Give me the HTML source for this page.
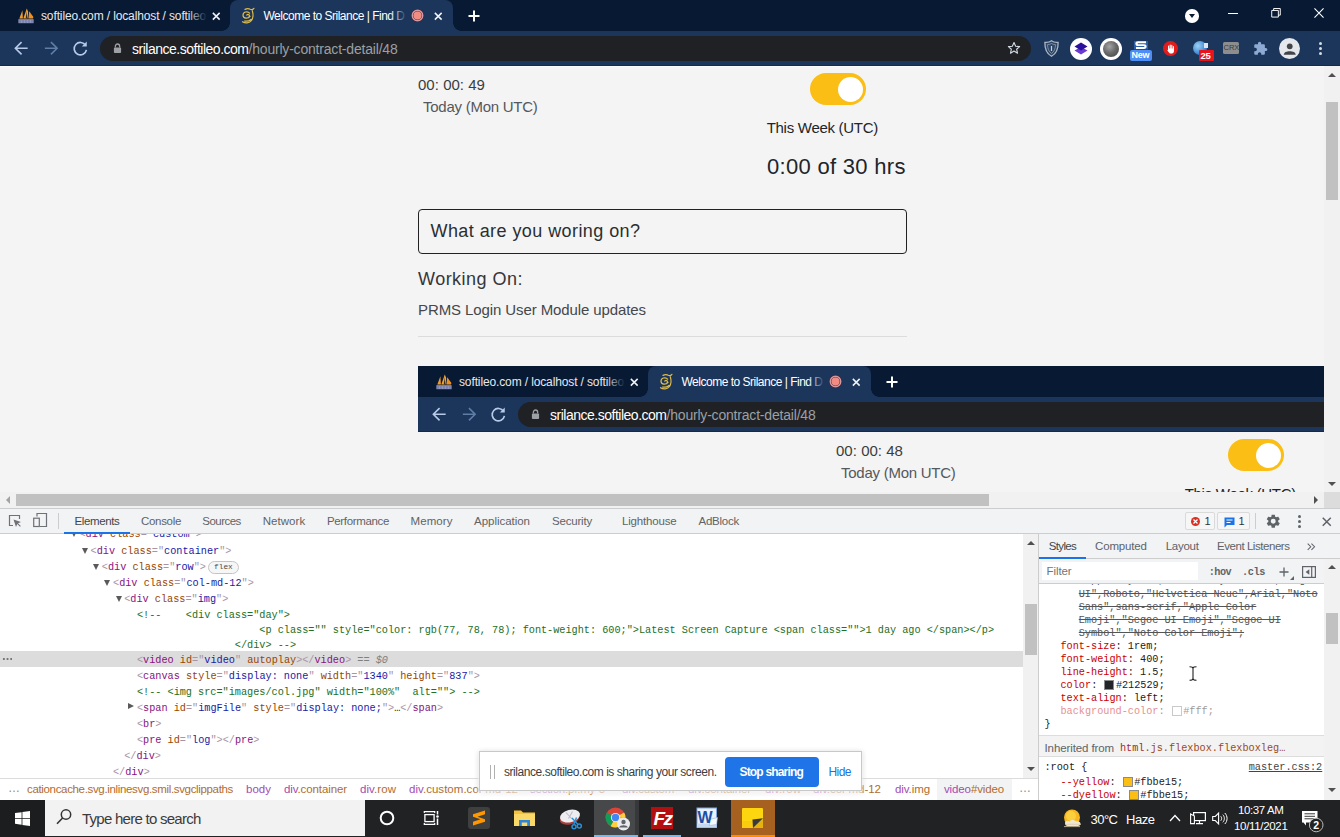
<!DOCTYPE html>
<html lang="en">
<head>
<meta charset="utf-8">
<title>Welcome to Srilance | Find D</title>
<style>
*{box-sizing:border-box;margin:0;padding:0}
html,body{width:1340px;height:837px;overflow:hidden;background:#f4f4f4}
body{position:relative;font-family:"Liberation Sans",sans-serif;font-size:12px;color:#222}
.abs,.t{position:absolute;white-space:nowrap}
.t{line-height:1}
svg{position:absolute;display:block;overflow:visible}

/* ---------- chrome top (66px) ---------- */
.ctop{position:absolute;left:0;top:0;width:1340px;height:66px;overflow:hidden}
.tabstrip{position:absolute;left:0;top:0;width:100%;height:31px;background:#081a33}
.toolbar{position:absolute;left:0;top:31px;width:100%;height:35px;background:#1b355b;border-bottom:1px solid #16294a}
.tab1{position:absolute;left:0;top:0;width:230px;height:31px}
.tab2{position:absolute;left:230px;top:0;width:223px;height:31px}
.tab2bg{position:absolute;left:0;top:0;width:223px;height:31px;background:#1b355b;border-radius:8px 8px 0 0}
.flareL{position:absolute;left:-8px;top:23px;width:8px;height:8px;background:radial-gradient(circle at 0 0,rgba(0,0,0,0) 7.5px,#1b355b 8px)}
.flareR{position:absolute;left:223px;top:23px;width:8px;height:8px;background:radial-gradient(circle at 100% 0,rgba(0,0,0,0) 7.5px,#1b355b 8px)}
.fav1{left:18px;top:8px}
.fav2{left:11px;top:7px}
.tt1{left:41px;top:10px;font-size:12px;color:#e6e9ef}
.tt2{left:33.500px;top:10px;font-size:12px;color:#fff}
.fade2{position:absolute;left:160px;top:6px;width:17px;height:20px;background:linear-gradient(90deg,rgba(27,53,91,0),#1b355b)}
.fade1{position:absolute;left:188px;top:6px;width:19px;height:20px;background:linear-gradient(90deg,rgba(8,26,51,0),#081a33)}
.rec{position:absolute;left:181px;top:9.3px;width:13px;height:13px;border-radius:50%;background:radial-gradient(circle,#f28b82 0,#f28b82 3.600px,#9c5d68 4.100px,#9c5d68 4.700px,#cf9aa0 5px,#cf9aa0 5.500px,#a5656f 5.800px,rgba(165,101,111,0) 6.400px)}
.x1{left:211.500px;top:12px}
.x2{left:204px;top:11.700px}
.plus{left:468px;top:10px}
.nav{top:39.800px}
.back{left:13px}.fwd{left:43px}.reload{left:72px}
.omni{position:absolute;left:100px;top:36px;width:931px;height:25px;border-radius:13px;background:#202124}
.lock{left:12.5px;top:6.5px}
.url{left:32px;top:5.5px;font-size:14px}
.url .dom{color:#fff}.url .path{color:#9aa0a6}
.star{left:907px;top:5px}

/* ---------- page ---------- */
#page{position:absolute;left:0;top:66px;width:1324px;height:426px;background:#f4f4f4;overflow:hidden;box-shadow:inset 0 1px 0 #f9fbfd}
#page .pt{color:#3a3d40}
.toggle{position:absolute;width:56px;height:32px;border-radius:16px;background:#fbbe15}
.toggle i{position:absolute;left:28px;top:4px;width:25px;height:25px;border-radius:50%;background:#fff}
.inp{position:absolute;left:418px;top:143px;width:489px;height:45px;border:1px solid #222;border-radius:4px}
.hr{position:absolute;left:418px;top:270px;width:489px;height:1px;background:#dcdcdc}
#video{position:absolute;left:418px;top:300px;width:906px;height:126px;overflow:hidden}
#video .vpage{position:absolute;left:0;top:66px;width:1340px;height:400px;background:#f4f4f4}

/* scrollbars */
.vsb{position:absolute;left:1324px;top:66px;width:16px;height:426px;background:#f1f1f1}
.vsb b{position:absolute;left:2px;top:36px;width:12px;height:98px;background:#c1c1c1}
.hsb{position:absolute;left:0;top:492px;width:1324px;height:16px;background:#f1f1f1}
.hsb b{position:absolute;left:16px;top:2px;width:973px;height:12px;background:#c1c1c1}
.corner{position:absolute;left:1324px;top:492px;width:16px;height:16px;background:#dcdcdc}


/* ---------- devtools ---------- */
#dt{position:absolute;left:0;top:508px;width:1340px;height:292px;background:#fff;overflow:hidden}
#dt i,.vsb i,.hsb i{position:absolute;display:block;font-style:normal}
.arL{width:0;height:0;border-top:4px solid transparent;border-bottom:4px solid transparent;border-right:4px solid #a3a3a3}
.arR{width:0;height:0;border-top:4px solid transparent;border-bottom:4px solid transparent;border-left:4px solid #505050}
.mono{font-family:"Liberation Mono",monospace;font-size:10.21px}
.dtbar{position:absolute;left:0;top:0;width:1340px;height:26px;background:#f1f3f4;border-top:1px solid #cdcdcd;border-bottom:1px solid #cdcdcd}
.dtbar .tabtx{top:6.5px;font-size:11.5px;color:#5f6368}
.sep{top:4px;width:1px;height:16px;background:#cdcdcd}
.ul{top:23px;height:2px;background:#1a73e8}
.badge{position:absolute;top:3px;height:18px;border:1px solid #dadada;border-radius:2px;background:#f6f6f6}
.errc{left:5px;top:3.500px;width:9px;height:9px;border-radius:50%;background:#d93025}
.kdot{width:3px;height:3px;border-radius:50%;background:#5f6368}
.tree{position:absolute;left:0;top:0;width:1023px;height:271px;overflow:hidden;font-family:"Liberation Mono",monospace;font-size:10.21px;color:#222}
.ln{position:absolute;white-space:pre;line-height:16px;height:16px;margin-top:1px}
.ln.cm{line-height:15px;height:45px;margin-top:1.6px}
.p{color:#a894a6}.n{color:#881280}.a{color:#994500}.v{color:#1a1aa6}.c{color:#236e25}.k{color:#222}
.eq{color:#808080;font-style:italic}
.sel{position:absolute;left:0;width:1023px;height:16px;background:#dcdcdc}
.dots3{width:10px;height:2px;background:radial-gradient(circle,#777 0.9px,transparent 1.2px) 0 0/3.7px 2px repeat-x}
.trd{width:0;height:0;border-left:3.5px solid transparent;border-right:3.5px solid transparent;border-top:6px solid #5a5a5a}
.trr{width:0;height:0;border-top:3.5px solid transparent;border-bottom:3.5px solid transparent;border-left:6px solid #5a5a5a}
.flexb{position:absolute;height:12.5px;width:30.5px;border:1px solid #c4c4c4;border-radius:7px;background:#f6f6f6;font-size:7.8px;line-height:10.5px;text-align:center;color:#4a4a4a;font-family:"Liberation Mono",monospace}
.tsb{position:absolute;left:1023px;top:26px;width:15px;height:244px;background:#f1f1f1}
.tsb b{position:absolute;left:2px;top:70px;width:12px;height:51px;background:#c1c1c1}
.arU{width:0;height:0;border-left:4px solid transparent;border-right:4px solid transparent;border-bottom:4px solid #505050}
.arD{width:0;height:0;border-left:4px solid transparent;border-right:4px solid transparent;border-top:4px solid #505050}
.vdiv{position:absolute;left:1038px;top:26px;width:1px;height:266px;background:#cdcdcd}
.sp{position:absolute;left:1039px;top:26px;width:301px;height:266px;background:#fff}
.sphead{position:absolute;left:0;top:0;width:301px;height:25px;background:#f1f3f4;border-bottom:1px solid #cdcdcd}
.sphead .tabtx2{top:7px;font-size:11.5px;color:#5f6368}
.spfilter{position:absolute;left:0;top:25px;width:285px;height:25px;background:#f1f3f4;border-bottom:1px solid #cdcdcd}
.finp{position:absolute;left:3px;top:3px;width:156px;height:18px;background:#fff}
.spbody{position:absolute;left:0;top:50px;width:285px;height:216px;overflow:hidden;font-family:"Liberation Mono",monospace;font-size:10.21px;color:#222}
.sl{position:absolute;white-space:pre;line-height:13px;height:13px}
.sl.st{text-decoration:line-through;color:#555}
.pn{color:#c80000}
.sw{position:relative!important;display:inline-block!important;width:10px;height:10px;border:1px solid #8a8a8a;vertical-align:-2px;margin-left:1px;margin-right:1.5px}
.inh{position:absolute;left:0;top:151px;width:285px;height:22px;background:#f3f3f3;border-top:1px solid #ddd;border-bottom:1px solid #ddd}
.ssb{position:absolute;left:285px;top:25px;width:16px;height:241px;background:#f1f1f1}
.ssb b{position:absolute;left:2px;top:54px;width:12px;height:31px;background:#c1c1c1}
.bc{position:absolute;left:0;top:270px;width:1038px;height:22px;background:#fff;border-top:1px solid #dcdcdc}
.bc .cr{top:5px;font-size:11.5px;color:#a34bb3}
.bc .o{color:#b06c30}
.crsel{left:937px;top:0;width:74.500px;height:21px;background:#f1f3f4}
.share{position:absolute;left:478.5px;top:243px;width:383px;height:40px;background:#fff;border:1px solid #c8c8c8;box-shadow:0 2px 3px 1px rgba(255,255,255,.72),0 1px 5px rgba(0,0,0,.22)}
.grip{top:13px;width:1.5px;height:14px;background:#b0b0b0}
.stopb{position:absolute;left:245px;top:5px;width:94px;height:29.500px;border-radius:4px;background:#1f75e7}


/* ---------- taskbar ---------- */
#tb{position:absolute;left:0;top:800px;width:1340px;height:37px;background:#212223;overflow:hidden}
.startb{position:absolute;left:0;top:0;width:45px;height:37px;background:#1c1d1e}
.srch{position:absolute;left:45px;top:0;width:320px;height:36px;background:#f2f2f2}
.kd{left:1319px;width:3px;height:3px;border-radius:50%;background:#d5dbe4}
.inh .t{font-family:"Liberation Sans",sans-serif}
.inh .t.mono{font-family:"Liberation Mono",monospace}
</style>
</head>
<body>
<div class="ctop">
  <div class="tabstrip"></div>
  <div class="tab1">
    <svg class="fav1" viewBox="0 0 16 16" width="16" height="16"><path d="M1.3 10.6 L4.4 2.2 L4.9 10.6 Z" fill="#f39a26"/><path d="M5.3 10.600 L8.800 0.400 L10.200 4 L9.500 10.600 Z" fill="#f7a52e"/><path d="M8.300 3 L9.300 10.600 L7.800 10.600 Z" fill="#3a2a20"/><path d="M10.300 10.600 L11.200 3.300 L15.400 9 L15 10.600 Z" fill="#f08f1f"/><rect x="0.400" y="11.200" width="15.200" height="4" fill="#8f96bd"/><path d="M2 12 V15 M5 12 V15 M8 12 V15 M11 12 V15 M14 12 V15" stroke="#5d6490" stroke-width=".7"/></svg>
    <span class="t tt1" style="letter-spacing:-0.126px;">softileo.com / localhost / softileo</span>
    <div class="fade1"></div>
    <svg class="x1" viewBox="0 0 10 10" width="8.5" height="8.500"><path d="M1 1 L9 9 M9 1 L1 9" stroke="#f1f3f6" stroke-width="1.800" fill="none"/></svg>
  </div>
  <div class="tab2">
    <div class="tab2bg"></div>
    <div class="flareL"></div><div class="flareR"></div>
    <svg class="fav2" viewBox="241 7 14 17" width="14" height="17"><path d="M245 9.400 Q247.800 7.900 250.300 9.300 Q252.400 10.300 253.900 8.300 M249.600 13.200 C247.600 10.600 242.800 12 243 15.400 C243.200 18.600 248 19.100 250 16.300 M246.800 15 C248.300 13.700 250.200 15.100 249 16.400 M252.300 10.800 C253.300 14 253.200 18 251.500 20.500 C249.500 23.400 245 23.300 242.500 21.700 M244.500 21 C247 21.500 249.500 20.800 251 19.500" stroke="#e0bd48" stroke-width="1.200" fill="none" stroke-linecap="round"/></svg>
    <span class="t tt2" style="letter-spacing:-0.498px;">Welcome to Srilance | Find D</span>
    <div class="fade2"></div>
    <div class="rec"></div>
    <svg class="x2" viewBox="0 0 10 10" width="8.500" height="8.500"><path d="M1 1 L9 9 M9 1 L1 9" stroke="#f1f3f6" stroke-width="1.800" fill="none"/></svg>
  </div>
  <svg class="plus" viewBox="0 0 12 12" width="12" height="12"><path d="M6 0.5 V11.5 M0.5 6 H11.5" stroke="#fff" stroke-width="2" fill="none"/></svg>
  <div class="toolbar"></div>
  <svg class="nav back" viewBox="0 0 16 16" width="16.500" height="16.500"><path d="M14.200 8 H3 M8.300 2 L2.300 8 L8.300 14" stroke="#b7cbe8" stroke-width="1.550" fill="none"/></svg>
  <svg class="nav fwd" viewBox="0 0 16 16" width="16.500" height="16.500"><path d="M1.800 8 H13 M7.700 2 L13.700 8 L7.700 14" stroke="#5f7da5" stroke-width="1.550" fill="none"/></svg>
  <svg class="nav reload" viewBox="0 0 16 16" width="16.500" height="16.500"><path d="M13.200 5.200 A6 6 0 1 0 14 9.500" stroke="#b7cbe8" stroke-width="1.600" fill="none"/><path d="M14.300 1.500 V6.300 H9.500 Z" fill="#b7cbe8"/></svg>
  <div class="omni">
    <svg class="lock" viewBox="0 0 10 12" width="9" height="11"><path d="M2.6 5 V3.4 A2.4 2.4 0 0 1 7.4 3.4 V5" stroke="#9da0a5" stroke-width="1.4" fill="none"/><rect x="1" y="5" width="8" height="6" rx="1" fill="#9da0a5"/></svg>
    <span class="t url"><span class="dom" style="letter-spacing:-0.492px;">srilance.softileo.com</span><span class="path" style="letter-spacing:-0.195px;">/hourly-contract-detail/48</span></span>
    <svg class="star" viewBox="0 0 16 16" width="14" height="14"><path d="M8 1.8 L9.9 6 L14.4 6.4 L11 9.4 L12 13.9 L8 11.5 L4 13.9 L5 9.4 L1.6 6.4 L6.1 6 Z" stroke="#d6dde8" stroke-width="1.250" fill="none" stroke-linejoin="round"/></svg>
  </div>
  <div class="ext">
  <!-- shield -->
  <svg style="left:1044px;top:40px" width="15" height="17" viewBox="0 0 15 17"><path d="M7.5 0.8 C5.5 2.3 3 2.6 0.9 2.4 C0.7 8.5 2.6 13.5 7.5 16.2 C12.4 13.5 14.3 8.5 14.1 2.4 C12 2.6 9.5 2.3 7.5 0.8 Z" fill="#2d4669" stroke="#aeb6c2" stroke-width="1.300"/><path d="M7.5 3.5 C6.3 4.3 4.8 4.6 3.5 4.6 C3.6 8.6 4.8 11.6 7.5 13.5 C10.2 11.6 11.4 8.6 11.5 4.6 C10.2 4.6 8.7 4.3 7.5 3.5 Z" fill="none" stroke="#8f9aab" stroke-width=".800"/><path d="M7.5 6 V11" stroke="#c9d0da" stroke-width="1.200"/></svg>
  <!-- white circle purple layers -->
  <div class="abs" style="left:1070px;top:37.5px;width:22px;height:22px;border-radius:50%;background:#fff"></div>
  <svg style="left:1074px;top:42px" width="14" height="13" viewBox="0 0 14 13"><path d="M7 5 L13.5 8.5 L7 12.5 L0.5 8.5 Z" fill="#6a3bd1"/><path d="M7 0.5 L13.5 4.5 L7 8.5 L0.5 4.5 Z" fill="#2b109c"/></svg>
  <!-- white circle gray sphere -->
  <div class="abs" style="left:1100px;top:37.5px;width:22px;height:22px;border-radius:50%;background:#fff"></div>
  <div class="abs" style="left:1103px;top:40.500px;width:16px;height:16px;border-radius:50%;background:radial-gradient(circle at 40% 35%,#a5a5a5 0,#6b6b6b 45%,#3f3f3f 100%)"></div>
  <!-- S New -->
  <svg style="left:1134px;top:41px" width="14" height="8.500" viewBox="0 0 14 10" preserveAspectRatio="none"><rect width="14" height="10" fill="#2d5fa8"/><path d="M12 1.5 H4 C2 1.5 2 4.8 4 4.8 H10 C12 4.8 12 8.3 10 8.3 H2" stroke="#fff" stroke-width="2.2" fill="none"/></svg>
  <div class="abs" style="left:1130px;top:50px;width:22px;height:11px;border-radius:2px;background:#4c8df6"></div>
  <span class="t" style="left:1131.5px;top:51.2px;font-size:9px;font-weight:bold;color:#fff;letter-spacing:-0.2px">New</span>
  <!-- stop hand -->
  <div class="abs" style="left:1163px;top:41px;width:15px;height:15px;border-radius:50%;background:#e21b1b"></div>
  <svg style="left:1166.5px;top:43.5px" width="8" height="10" viewBox="0 0 8 10"><path d="M1.6 5 V2 M3.2 5 V1 M4.8 5 V1.3 M6.4 5.5 V2.5" stroke="#fff" stroke-width="1.1" stroke-linecap="round"/><path d="M1 4.5 H7 V7 C7 9 5.5 9.6 4 9.6 C2.5 9.6 1.8 8.8 0.3 6.3 L1 5.8 Z" fill="#fff"/></svg>
  <!-- globe + 25 -->
  <div class="abs" style="left:1193px;top:41px;width:14px;height:14px;border-radius:50%;background:radial-gradient(circle at 35% 35%,#9fd0f5,#2b7fd0 70%,#1d5ca8)"></div>
  <div class="abs" style="left:1204px;top:43px;width:4px;height:5px;background:#dfe6ef"></div>
  <div class="abs" style="left:1198.5px;top:50px;width:15px;height:11px;border-radius:1px;background:#e8141c"></div>
  <span class="t" style="left:1200.5px;top:50.8px;font-size:9.5px;font-weight:bold;color:#fff;letter-spacing:-0.3px">25</span>
  <!-- CRX -->
  <div class="abs" style="left:1222.5px;top:42px;width:16px;height:12px;border-radius:1.5px;background:#8d8d8d"></div>
  <span class="t" style="left:1223.6px;top:44.2px;font-size:7.6px;color:#3c3c3c;letter-spacing:-0.2px">CRX</span>
  <!-- puzzle -->
  <svg style="left:1253px;top:41px" width="15" height="15" viewBox="0 0 24 24"><path fill="#8eaad4" d="M20.5 11H19V7c0-1.1-.9-2-2-2h-4V3.5a2.5 2.5 0 0 0-5 0V5H4c-1.1 0-2 .9-2 2v3.8h1.5c1.5 0 2.7 1.2 2.7 2.7S5 16.200 3.500 16.200H2V20c0 1.100.900 2 2 2h3.800v-1.500c0-1.500 1.200-2.700 2.700-2.700s2.700 1.200 2.700 2.700V22H17c1.100 0 2-.900 2-2v-4h1.500a2.500 2.500 0 0 0 0-5z"/></svg>
  <!-- avatar -->
  <div class="abs" style="left:1279.3px;top:38px;width:21px;height:21px;border-radius:50%;background:#e4e7eb"></div>
  <svg style="left:1283px;top:42.5px" width="13.5" height="12" viewBox="0 0 14 12"><circle cx="7" cy="3.2" r="3" fill="#414549"/><path d="M0.8 12 C0.8 7.200 13.200 7.200 13.200 12 Z" fill="#414549"/></svg>
  <!-- kebab -->
  <div class="abs kd" style="top:42.2px"></div><div class="abs kd" style="top:47.2px"></div><div class="abs kd" style="top:52.2px"></div>
  <!-- window controls -->
  <div class="abs" style="left:1185.200px;top:9px;width:13.500px;height:13.500px;border-radius:50%;background:#fff"></div>
  <svg style="left:1189px;top:14.300px" width="6" height="4" viewBox="0 0 6 4"><path d="M0 0 H6 L3 4 Z" fill="#0b1a33"/></svg>
  <div class="abs" style="left:1228px;top:12.800px;width:10px;height:1.200px;background:#fff"></div>
  <svg style="left:1270.800px;top:8.200px" width="10" height="9.600" viewBox="0 0 11 11"><path d="M0.6 2.8 H8.200 V10.400 H0.600 Z M2.800 2.800 V0.600 H10.400 V8.200 H8.200" stroke="#fff" stroke-width="1.1" fill="none"/></svg>
  <svg style="left:1313.600px;top:8px" width="10" height="10" viewBox="0 0 11 11"><path d="M0.500 0.500 L10.500 10.500 M10.500 0.500 L0.500 10.500" stroke="#fff" stroke-width="1.2"/></svg>
</div>

</div>


<div id="page">
  <span class="t" style="letter-spacing:0.027px;left:418px;top:11px;font-size:15px;color:#3a3d40">00: 00: 49</span>
  <span class="t" style="letter-spacing:-0.257px;left:423px;top:33px;font-size:15px;color:#55585c">Today (Mon UTC)</span>
  <div class="toggle" style="left:810px;top:7px"><i></i></div>
  <span class="t" style="letter-spacing:-0.284px;left:766.7px;top:53.5px;font-size:15px;color:#212529">This Week (UTC)</span>
  <span class="t" style="letter-spacing:0.304px;left:767px;top:90px;font-size:22px;color:#212529">0:00 of 30 hrs</span>
  <div class="inp"><span class="t" style="letter-spacing:0.430px;left:11.5px;top:12px;font-size:18px;color:#2b2e31">What are you woring on?</span></div>
  <span class="t" style="letter-spacing:0.482px;left:418px;top:204px;font-size:18px;color:#33363a">Working On:</span>
  <span class="t" style="letter-spacing:-0.099px;left:418px;top:236px;font-size:15px;color:#44474b">PRMS Login User Module updates</span>
  <div class="hr"></div>
  <div id="video">
    <div class="ctop">
  <div class="tabstrip"></div>
  <div class="tab1">
    <svg class="fav1" viewBox="0 0 16 16" width="16" height="16"><path d="M1.3 10.6 L4.4 2.2 L4.9 10.6 Z" fill="#f39a26"/><path d="M5.3 10.600 L8.800 0.400 L10.200 4 L9.500 10.600 Z" fill="#f7a52e"/><path d="M8.300 3 L9.300 10.600 L7.800 10.600 Z" fill="#3a2a20"/><path d="M10.300 10.600 L11.200 3.300 L15.400 9 L15 10.600 Z" fill="#f08f1f"/><rect x="0.400" y="11.200" width="15.200" height="4" fill="#8f96bd"/><path d="M2 12 V15 M5 12 V15 M8 12 V15 M11 12 V15 M14 12 V15" stroke="#5d6490" stroke-width=".7"/></svg>
    <span class="t tt1" style="letter-spacing:-0.126px;">softileo.com / localhost / softileo</span>
    <div class="fade1"></div>
    <svg class="x1" viewBox="0 0 10 10" width="8.5" height="8.500"><path d="M1 1 L9 9 M9 1 L1 9" stroke="#f1f3f6" stroke-width="1.800" fill="none"/></svg>
  </div>
  <div class="tab2">
    <div class="tab2bg"></div>
    <div class="flareL"></div><div class="flareR"></div>
    <svg class="fav2" viewBox="241 7 14 17" width="14" height="17"><path d="M245 9.400 Q247.800 7.900 250.300 9.300 Q252.400 10.300 253.900 8.300 M249.600 13.200 C247.600 10.600 242.800 12 243 15.400 C243.200 18.600 248 19.100 250 16.300 M246.800 15 C248.300 13.700 250.200 15.100 249 16.400 M252.300 10.800 C253.300 14 253.200 18 251.500 20.500 C249.500 23.400 245 23.300 242.500 21.700 M244.500 21 C247 21.500 249.500 20.800 251 19.500" stroke="#e0bd48" stroke-width="1.200" fill="none" stroke-linecap="round"/></svg>
    <span class="t tt2" style="letter-spacing:-0.498px;">Welcome to Srilance | Find D</span>
    <div class="fade2"></div>
    <div class="rec"></div>
    <svg class="x2" viewBox="0 0 10 10" width="8.500" height="8.500"><path d="M1 1 L9 9 M9 1 L1 9" stroke="#f1f3f6" stroke-width="1.800" fill="none"/></svg>
  </div>
  <svg class="plus" viewBox="0 0 12 12" width="12" height="12"><path d="M6 0.5 V11.5 M0.5 6 H11.5" stroke="#fff" stroke-width="2" fill="none"/></svg>
  <div class="toolbar"></div>
  <svg class="nav back" viewBox="0 0 16 16" width="16.500" height="16.500"><path d="M14.200 8 H3 M8.300 2 L2.300 8 L8.300 14" stroke="#b7cbe8" stroke-width="1.550" fill="none"/></svg>
  <svg class="nav fwd" viewBox="0 0 16 16" width="16.500" height="16.500"><path d="M1.800 8 H13 M7.700 2 L13.700 8 L7.700 14" stroke="#5f7da5" stroke-width="1.550" fill="none"/></svg>
  <svg class="nav reload" viewBox="0 0 16 16" width="16.500" height="16.500"><path d="M13.200 5.200 A6 6 0 1 0 14 9.500" stroke="#b7cbe8" stroke-width="1.600" fill="none"/><path d="M14.300 1.500 V6.300 H9.500 Z" fill="#b7cbe8"/></svg>
  <div class="omni">
    <svg class="lock" viewBox="0 0 10 12" width="9" height="11"><path d="M2.6 5 V3.4 A2.4 2.4 0 0 1 7.4 3.4 V5" stroke="#9da0a5" stroke-width="1.4" fill="none"/><rect x="1" y="5" width="8" height="6" rx="1" fill="#9da0a5"/></svg>
    <span class="t url"><span class="dom" style="letter-spacing:-0.492px;">srilance.softileo.com</span><span class="path" style="letter-spacing:-0.195px;">/hourly-contract-detail/48</span></span>
    <svg class="star" viewBox="0 0 16 16" width="14" height="14"><path d="M8 1.8 L9.9 6 L14.4 6.4 L11 9.4 L12 13.9 L8 11.5 L4 13.9 L5 9.4 L1.6 6.4 L6.1 6 Z" stroke="#d6dde8" stroke-width="1.250" fill="none" stroke-linejoin="round"/></svg>
  </div>
  <div class="ext">
  <!-- shield -->
  <svg style="left:1044px;top:40px" width="15" height="17" viewBox="0 0 15 17"><path d="M7.5 0.8 C5.5 2.3 3 2.6 0.9 2.4 C0.7 8.5 2.6 13.5 7.5 16.2 C12.4 13.5 14.3 8.5 14.1 2.4 C12 2.6 9.5 2.3 7.5 0.8 Z" fill="#2d4669" stroke="#aeb6c2" stroke-width="1.300"/><path d="M7.5 3.5 C6.3 4.3 4.8 4.6 3.5 4.6 C3.6 8.6 4.8 11.6 7.5 13.5 C10.2 11.6 11.4 8.6 11.5 4.6 C10.2 4.6 8.7 4.3 7.5 3.5 Z" fill="none" stroke="#8f9aab" stroke-width=".800"/><path d="M7.5 6 V11" stroke="#c9d0da" stroke-width="1.200"/></svg>
  <!-- white circle purple layers -->
  <div class="abs" style="left:1070px;top:37.5px;width:22px;height:22px;border-radius:50%;background:#fff"></div>
  <svg style="left:1074px;top:42px" width="14" height="13" viewBox="0 0 14 13"><path d="M7 5 L13.5 8.5 L7 12.5 L0.5 8.5 Z" fill="#6a3bd1"/><path d="M7 0.5 L13.5 4.5 L7 8.5 L0.5 4.5 Z" fill="#2b109c"/></svg>
  <!-- white circle gray sphere -->
  <div class="abs" style="left:1100px;top:37.5px;width:22px;height:22px;border-radius:50%;background:#fff"></div>
  <div class="abs" style="left:1103px;top:40.500px;width:16px;height:16px;border-radius:50%;background:radial-gradient(circle at 40% 35%,#a5a5a5 0,#6b6b6b 45%,#3f3f3f 100%)"></div>
  <!-- S New -->
  <svg style="left:1134px;top:41px" width="14" height="8.500" viewBox="0 0 14 10" preserveAspectRatio="none"><rect width="14" height="10" fill="#2d5fa8"/><path d="M12 1.5 H4 C2 1.5 2 4.8 4 4.8 H10 C12 4.8 12 8.3 10 8.3 H2" stroke="#fff" stroke-width="2.2" fill="none"/></svg>
  <div class="abs" style="left:1130px;top:50px;width:22px;height:11px;border-radius:2px;background:#4c8df6"></div>
  <span class="t" style="left:1131.5px;top:51.2px;font-size:9px;font-weight:bold;color:#fff;letter-spacing:-0.2px">New</span>
  <!-- stop hand -->
  <div class="abs" style="left:1163px;top:41px;width:15px;height:15px;border-radius:50%;background:#e21b1b"></div>
  <svg style="left:1166.5px;top:43.5px" width="8" height="10" viewBox="0 0 8 10"><path d="M1.6 5 V2 M3.2 5 V1 M4.8 5 V1.3 M6.4 5.5 V2.5" stroke="#fff" stroke-width="1.1" stroke-linecap="round"/><path d="M1 4.5 H7 V7 C7 9 5.5 9.6 4 9.6 C2.5 9.6 1.8 8.8 0.3 6.3 L1 5.8 Z" fill="#fff"/></svg>
  <!-- globe + 25 -->
  <div class="abs" style="left:1193px;top:41px;width:14px;height:14px;border-radius:50%;background:radial-gradient(circle at 35% 35%,#9fd0f5,#2b7fd0 70%,#1d5ca8)"></div>
  <div class="abs" style="left:1204px;top:43px;width:4px;height:5px;background:#dfe6ef"></div>
  <div class="abs" style="left:1198.5px;top:50px;width:15px;height:11px;border-radius:1px;background:#e8141c"></div>
  <span class="t" style="left:1200.5px;top:50.8px;font-size:9.5px;font-weight:bold;color:#fff;letter-spacing:-0.3px">25</span>
  <!-- CRX -->
  <div class="abs" style="left:1222.5px;top:42px;width:16px;height:12px;border-radius:1.5px;background:#8d8d8d"></div>
  <span class="t" style="left:1223.6px;top:44.2px;font-size:7.6px;color:#3c3c3c;letter-spacing:-0.2px">CRX</span>
  <!-- puzzle -->
  <svg style="left:1253px;top:41px" width="15" height="15" viewBox="0 0 24 24"><path fill="#8eaad4" d="M20.5 11H19V7c0-1.1-.9-2-2-2h-4V3.5a2.5 2.5 0 0 0-5 0V5H4c-1.1 0-2 .9-2 2v3.8h1.5c1.5 0 2.7 1.2 2.7 2.7S5 16.200 3.500 16.200H2V20c0 1.100.900 2 2 2h3.800v-1.500c0-1.500 1.200-2.700 2.700-2.700s2.700 1.200 2.700 2.700V22H17c1.100 0 2-.900 2-2v-4h1.500a2.500 2.500 0 0 0 0-5z"/></svg>
  <!-- avatar -->
  <div class="abs" style="left:1279.3px;top:38px;width:21px;height:21px;border-radius:50%;background:#e4e7eb"></div>
  <svg style="left:1283px;top:42.5px" width="13.5" height="12" viewBox="0 0 14 12"><circle cx="7" cy="3.2" r="3" fill="#414549"/><path d="M0.8 12 C0.8 7.200 13.200 7.200 13.200 12 Z" fill="#414549"/></svg>
  <!-- kebab -->
  <div class="abs kd" style="top:42.2px"></div><div class="abs kd" style="top:47.2px"></div><div class="abs kd" style="top:52.2px"></div>
  <!-- window controls -->
  <div class="abs" style="left:1185.200px;top:9px;width:13.500px;height:13.500px;border-radius:50%;background:#fff"></div>
  <svg style="left:1189px;top:14.300px" width="6" height="4" viewBox="0 0 6 4"><path d="M0 0 H6 L3 4 Z" fill="#0b1a33"/></svg>
  <div class="abs" style="left:1228px;top:12.800px;width:10px;height:1.200px;background:#fff"></div>
  <svg style="left:1270.800px;top:8.200px" width="10" height="9.600" viewBox="0 0 11 11"><path d="M0.6 2.8 H8.200 V10.400 H0.600 Z M2.800 2.800 V0.600 H10.400 V8.200 H8.200" stroke="#fff" stroke-width="1.1" fill="none"/></svg>
  <svg style="left:1313.600px;top:8px" width="10" height="10" viewBox="0 0 11 11"><path d="M0.500 0.500 L10.500 10.500 M10.500 0.500 L0.500 10.500" stroke="#fff" stroke-width="1.2"/></svg>
</div>

</div>

    <div class="vpage">
      <span class="t" style="letter-spacing:0.027px;left:418px;top:11px;font-size:15px;color:#3a3d40">00: 00: 48</span>
      <span class="t" style="letter-spacing:-0.257px;left:423px;top:33px;font-size:15px;color:#55585c">Today (Mon UTC)</span>
      <div class="toggle" style="left:810px;top:7px"><i></i></div>
      <span class="t" style="letter-spacing:-0.284px;left:766.7px;top:53.5px;font-size:15px;color:#212529">This Week (UTC)</span>
    </div>
  </div>
</div>
<div class="vsb"><b></b><i class="arU" style="left:4px;top:7px"></i><i class="arD" style="left:4px;top:416px"></i></div>
<div class="hsb"><b></b><i class="arL" style="left:6px;top:4px"></i><i class="arR" style="left:1314px;top:4px"></i></div>
<div class="corner"></div>

<div id="dt">
<div class="tree">
<i class="trd" style="left:70.7px;top:23px"></i><div class="ln " style="left:79.40px;top:17px"><span class="p">&lt;</span><span class="n">div</span> <span class="a">class</span><span class="p">="</span><span class="v">custom</span><span class="p">"</span><span class="p">&gt;</span></div>
<i class="trd" style="left:81.9px;top:40px"></i><div class="ln " style="left:90.60px;top:34px"><span class="p">&lt;</span><span class="n">div</span> <span class="a">class</span><span class="p">="</span><span class="v">container</span><span class="p">"</span><span class="p">&gt;</span></div>
<i class="trd" style="left:93.1px;top:56px"></i><div class="ln " style="left:101.80px;top:50px"><span class="p">&lt;</span><span class="n">div</span> <span class="a">class</span><span class="p">="</span><span class="v">row</span><span class="p">"</span><span class="p">&gt;</span></div>
<i class="trd" style="left:104.3px;top:72px"></i><div class="ln " style="left:113.00px;top:66px"><span class="p">&lt;</span><span class="n">div</span> <span class="a">class</span><span class="p">="</span><span class="v">col-md-12</span><span class="p">"</span><span class="p">&gt;</span></div>
<i class="trd" style="left:115.5px;top:88px"></i><div class="ln " style="left:124.20px;top:82px"><span class="p">&lt;</span><span class="n">div</span> <span class="a">class</span><span class="p">="</span><span class="v">img</span><span class="p">"</span><span class="p">&gt;</span></div>
<div class="ln c cm" style="left:136.90px;top:98px">&lt;!--    &lt;div class="day"&gt;
                    &lt;p class="" style="color: rgb(77, 78, 78); font-weight: 600;"&gt;Latest Screen Capture &lt;span class=""&gt;1 day ago &lt;/span&gt;&lt;/p&gt;
                &lt;/div&gt; --&gt;</div>
<div class="sel" style="top:143px"></div><span class="t dots3" style="left:1.6px;top:150px"></span>
<div class="ln " style="left:136.90px;top:143px"><span class="p">&lt;</span><span class="n">video</span> <span class="a">id</span><span class="p">="</span><span class="v">video</span><span class="p">"</span> <span class="a">autoplay</span><span class="p">&gt;</span><span class="p">&lt;/</span><span class="n">video</span><span class="p">&gt;</span><span class="eq"> == $0</span></div>
<div class="ln " style="left:136.90px;top:159px"><span class="p">&lt;</span><span class="n">canvas</span> <span class="a">style</span><span class="p">="</span><span class="v">display: none</span><span class="p">"</span> <span class="a">width</span><span class="p">="</span><span class="v">1340</span><span class="p">"</span> <span class="a">height</span><span class="p">="</span><span class="v">837</span><span class="p">"</span><span class="p">&gt;</span></div>
<div class="ln " style="left:136.90px;top:175px"><span class="c">&lt;!-- &lt;img src="images/col.jpg" width="100%"  alt=""&gt; --&gt;</span></div>
<i class="trr" style="left:128.4px;top:195px"></i><div class="ln " style="left:136.90px;top:191px"><span class="p">&lt;</span><span class="n">span</span> <span class="a">id</span><span class="p">="</span><span class="v">imgFile</span><span class="p">"</span> <span class="a">style</span><span class="p">="</span><span class="v">display: none;</span><span class="p">"</span><span class="p">&gt;</span><span class="k">…</span><span class="p">&lt;/</span><span class="n">span</span><span class="p">&gt;</span></div>
<div class="ln " style="left:136.90px;top:207px"><span class="p">&lt;</span><span class="n">br</span><span class="p">&gt;</span></div>
<div class="ln " style="left:136.90px;top:223px"><span class="p">&lt;</span><span class="n">pre</span> <span class="a">id</span><span class="p">="</span><span class="v">log</span><span class="p">"</span><span class="p">&gt;</span><span class="p">&lt;/</span><span class="n">pre</span><span class="p">&gt;</span></div>
<div class="ln " style="left:124.20px;top:239px"><span class="p">&lt;/</span><span class="n">div</span><span class="p">&gt;</span></div>
<div class="ln " style="left:113.00px;top:255px"><span class="p">&lt;/</span><span class="n">div</span><span class="p">&gt;</span></div>
<span class="flexb" style="left:208.2px;top:53px">flex</span>
</div>
<!-- tree scrollbar -->
<div class="tsb"><b></b>
  <i class="arU" style="left:3.5px;top:7px"></i><i class="arD" style="left:3.5px;top:233px"></i>
</div>
<div class="vdiv"></div>

<!-- top toolbar -->
<div class="dtbar">
  <svg style="left:8px;top:5px" width="14" height="14" viewBox="0 0 14 14"><path d="M11.5 5 V1.5 H1.5 V11.5 H5" stroke="#6e7175" stroke-width="1.200" fill="none"/><path d="M5.5 5.5 L8 13 L9.3 10 L12 12.8 L12.8 12 L10 9.3 L13 8 Z" fill="#6e7175"/></svg>
  <svg style="left:32px;top:3px" width="16" height="16" viewBox="0 0 16 16"><path d="M5 4.500 V1.500 H14.500 V14.500 H8" stroke="#6e7175" stroke-width="1.200" fill="none"/><rect x="1.700" y="6.200" width="5.600" height="8.300" stroke="#6e7175" stroke-width="1.200" fill="none"/></svg>
  <i class="sep" style="left:58px"></i>
  <span class="t tabtx" style="letter-spacing:-0.367px;left:74.5px;color:#43464a">Elements</span>
  <i class="ul" style="left:64px;width:66px"></i>
  <span class="t tabtx" style="letter-spacing:-0.315px;left:141px">Console</span>
  <span class="t tabtx" style="letter-spacing:-0.527px;left:202.3px">Sources</span>
  <span class="t tabtx" style="letter-spacing:0.045px;left:262.7px">Network</span>
  <span class="t tabtx" style="letter-spacing:-0.349px;left:327px">Performance</span>
  <span class="t tabtx" style="letter-spacing:0.078px;left:410.5px">Memory</span>
  <span class="t tabtx" style="letter-spacing:-0.024px;left:474px">Application</span>
  <span class="t tabtx" style="letter-spacing:-0.193px;left:552px">Security</span>
  <span class="t tabtx" style="letter-spacing:-0.178px;left:622px">Lighthouse</span>
  <span class="t tabtx" style="letter-spacing:-0.241px;left:698.5px">AdBlock</span>

  <div class="badge" style="left:1185px;width:30px"><i class="errc"></i><svg style="left:6px;top:4.500px" width="7" height="7" viewBox="0 0 7 7"><path d="M1.5 1.5 L5.5 5.5 M5.5 1.5 L1.5 5.5" stroke="#fff" stroke-width="1.2"/></svg><span class="t" style="left:18.5px;top:3px;font-size:11px;color:#333">1</span></div>
  <div class="badge" style="left:1217px;width:33px"><svg style="left:6px;top:3.500px" width="11" height="11" viewBox="0 0 11 11"><path d="M0.5 0.5 H10.5 V8 H3 L0.5 10.5 Z" fill="#1a73e8"/><path d="M2.5 3 H8.5 M2.5 5.5 H6.5" stroke="#fff" stroke-width="1.1"/></svg><span class="t" style="left:20.5px;top:3px;font-size:11px;color:#333">1</span></div>
  <i class="sep" style="left:1255px"></i>
  <svg style="left:1264.5px;top:3.8px" width="16.5" height="16.5" viewBox="0 0 24 24"><path fill="#5f6368" d="M19.14 12.94c.04-.3.06-.61.06-.94 0-.32-.02-.64-.07-.94l2.03-1.58a.49.49 0 0 0 .12-.61l-1.92-3.32a.49.49 0 0 0-.59-.22l-2.39.96c-.5-.38-1.03-.7-1.62-.94l-.36-2.54a.48.48 0 0 0-.48-.41h-3.84c-.24 0-.43.17-.47.41l-.36 2.54c-.59.24-1.13.57-1.62.94l-2.39-.96a.49.49 0 0 0-.59.22L2.74 8.87c-.12.21-.08.47.12.61l2.03 1.58c-.05.3-.09.63-.09.94s.02.64.07.94l-2.03 1.58a.49.49 0 0 0-.12.61l1.92 3.32c.12.22.37.29.59.22l2.39-.96c.5.38 1.03.7 1.62.94l.36 2.54c.05.24.24.41.48.41h3.84c.24 0 .44-.17.47-.41l.36-2.54c.59-.24 1.13-.56 1.62-.94l2.39.96c.22.08.47 0 .59-.22l1.92-3.32c.12-.22.07-.47-.12-.61l-2.01-1.58zM12 15.6A3.6 3.6 0 1 1 12 8.4a3.6 3.6 0 0 1 0 7.2z"/></svg>
  <i class="kdot" style="left:1298px;top:5.5px"></i><i class="kdot" style="left:1298px;top:10.5px"></i><i class="kdot" style="left:1298px;top:15.5px"></i>
  <svg style="left:1322px;top:7.5px" width="9.5" height="9.5" viewBox="0 0 9 9"><path d="M0.7 0.7 L8.3 8.3 M8.3 0.7 L0.7 8.3" stroke="#5f6368" stroke-width="1.4"/></svg>
</div>

<!-- styles pane -->
<div class="sp">
  <div class="sphead">
    <span class="t tabtx2" style="letter-spacing:-0.638px;left:9.7px;color:#43464a">Styles</span>
    <i class="ul" style="left:0;top:23px;width:47px"></i>
    <span class="t tabtx2" style="letter-spacing:-0.158px;left:56px">Computed</span>
    <span class="t tabtx2" style="letter-spacing:-0.255px;left:126.7px">Layout</span>
    <span class="t tabtx2" style="letter-spacing:-0.451px;left:178px">Event Listeners</span>
    <svg style="left:268px;top:9px" width="8.500" height="7.500" viewBox="0 0 9 8"><path d="M0.7 0.7 L4 4 L0.7 7.3 M4.7 0.7 L8 4 L4.7 7.3" stroke="#5f6368" stroke-width="1.100" fill="none"/></svg>
  </div>
  <div class="spfilter">
    <div class="finp"></div>
    <span class="t" style="letter-spacing:-0.094px;left:7.6px;top:7px;font-size:11.5px;color:#757575">Filter</span>
    <span class="t mono" style="letter-spacing:-0.500px;left:169.7px;top:7.5px;color:#5f6368;font-weight:bold">:hov</span>
    <span class="t mono" style="letter-spacing:-0.375px;left:203px;top:7.5px;color:#5f6368;font-weight:bold">.cls</span>
    <svg style="left:239.5px;top:8px" width="10" height="10" viewBox="0 0 10 10"><path d="M5 0.5 V9.5 M0.5 5 H9.5" stroke="#5f6368" stroke-width="1.3"/></svg>
    <svg style="left:250.5px;top:17px" width="4" height="4" viewBox="0 0 4 4"><path d="M4 0 V4 H0 Z" fill="#5f6368"/></svg>
    <svg style="left:263px;top:6.5px" width="14" height="12" viewBox="0 0 14 12"><rect x="0.6" y="0.6" width="12.8" height="10.8" fill="none" stroke="#5f6368" stroke-width="1.2"/><path d="M9.7 0.6 V11.4" stroke="#5f6368" stroke-width="1.2"/><path d="M7.3 3.3 V8.7 L3.6 6 Z" fill="#5f6368"/></svg>
  </div>
  <div class="spbody">
    <div class="sl st" style="left:39.75px;top:-10px">-apple-system,BlinkMacSystemFont,"Segoe</div>
    <div class="sl st" style="left:39.75px;top:4.25px">UI",Roboto,"Helvetica Neue",Arial,"Noto</div>
    <div class="sl st" style="left:39.75px;top:17.25px">Sans",sans-serif,"Apple Color</div>
    <div class="sl st" style="left:39.75px;top:30.25px">Emoji","Segoe UI Emoji","Segoe UI</div>
    <div class="sl st" style="left:39.75px;top:43.25px">Symbol","Noto Color Emoji";</div>
    <div class="sl" style="left:21.5px;top:56.25px"><span class="pn">font-size</span>: 1rem;</div>
    <div class="sl" style="left:21.5px;top:69.25px"><span class="pn">font-weight</span>: 400;</div>
    <div class="sl" style="left:21.5px;top:82.25px"><span class="pn">line-height</span>: 1.5;</div>
    <div class="sl" style="left:21.5px;top:95.25px"><span class="pn">color</span>: <i class="sw" style="background:#212529"></i>#212529;</div>
    <div class="sl" style="left:21.5px;top:108.25px"><span class="pn">text-align</span>: left;</div>
    <div class="sl" style="left:21.5px;top:121.25px;opacity:.45"><span class="pn">background-color</span>: <i class="sw" style="background:#fff"></i>#fff;</div>
    <div class="sl" style="left:5.5px;top:134.25px">}</div>
    <div class="inh" style="top:151px"><span class="t" style="letter-spacing:-0.104px;left:5.5px;top:6.50px;font-size:11.5px;color:#5f6368">Inherited from</span><span class="t mono" style="left:81px;top:7.00px;color:#9a4a1c"><span style="color:#a02c2c">html</span>.js.flexbox.flexboxleg…</span></div>
    <div class="sl" style="left:5.5px;top:176.75px">:root {</div>
    <div class="sl" style="left:209.75px;top:176.75px;color:#444;text-decoration:underline">master.css:2</div>
    <div class="sl" style="left:21.5px;top:191.75px"><span class="pn">--yellow</span>: <i class="sw" style="background:#fbbe15"></i>#fbbe15;</div>
    <div class="sl" style="left:21.5px;top:204.75px"><span class="pn">--dyellow</span>: <i class="sw" style="background:#fbbe15"></i>#fbbe15;</div>
  </div>
  <div class="ssb"><b></b><i class="arU" style="left:4px;top:6px"></i><i class="arD" style="left:4px;top:229px"></i></div>
</div>
<!-- I-beam cursor -->
<svg style="left:1188.5px;top:158px" width="8" height="15" viewBox="0 0 8 15"><path d="M0.5 0.7 C2.5 0.7 4 1.2 4 2.5 C4 1.2 5.5 0.7 7.5 0.7 M0.5 14.3 C2.5 14.3 4 13.8 4 12.5 C4 13.8 5.5 14.3 7.5 14.3 M4 2.5 V12.5" stroke="#222" stroke-width="1.1" fill="none"/></svg>

<!-- breadcrumbs -->
<div class="bc">
  <span class="t" style="left:8px;top:3px;font-size:12px;color:#8a8a8a">…</span>
  <span class="t cr" style="letter-spacing:-0.338px;left:27px"><span class="o">cationcache.svg.inlinesvg.smil.svgclippaths</span></span>
  <span class="t cr" style="letter-spacing:0.016px;left:246px">body</span>
  <span class="t cr" style="letter-spacing:-0.106px;left:284px">div<span class="o">.container</span></span>
  <span class="t cr" style="letter-spacing:0.058px;left:360px">div<span class="o">.row</span></span>
  <span class="t cr" style="letter-spacing:0.027px;left:409px">div<span class="o">.custom.col-md-12</span></span>
  <span class="t cr" style="letter-spacing:-0.199px;left:530px">section<span class="o">.pf.my-5</span></span>
  <span class="t cr" style="letter-spacing:-0.212px;left:622px">div<span class="o">.custom</span></span>
  <span class="t cr" style="letter-spacing:-0.106px;left:688px">div<span class="o">.container</span></span>
  <span class="t cr" style="letter-spacing:0.058px;left:765px">div<span class="o">.row</span></span>
  <span class="t cr" style="letter-spacing:-0.014px;left:813px">div<span class="o">.col-md-12</span></span>
  <span class="t cr" style="letter-spacing:-0.085px;left:895px">div<span class="o">.img</span></span>
  <i class="crsel"></i>
  <span class="t cr" style="letter-spacing:-0.126px;left:944px">video<span class="o">#video</span></span>
  <span class="t" style="left:1019px;top:3px;font-size:12px;color:#8a8a8a">…</span>
</div>

<!-- share bar -->
<div class="share">
  <i class="grip" style="left:10px"></i><i class="grip" style="left:14px"></i>
  <span class="t" style="letter-spacing:-0.450px;left:24.5px;top:14px;font-size:12px;color:#3c4043">srilance.softileo.com is sharing your screen.</span>
  <div class="stopb"><span class="t" style="letter-spacing:-0.820px;left:15px;top:9px;font-size:12px;color:#fff;font-weight:bold">Stop sharing</span></div>
  <span class="t" style="letter-spacing:-0.547px;left:349px;top:14px;font-size:12px;color:#1a73e8">Hide</span>
</div>

</div>

<div id="tb">
<div class="startb"></div>
<svg style="left:15px;top:11px" width="15" height="15" viewBox="0 0 15 15"><path d="M0 2.1 L6.6 1.2 V7 H0 Z M7.4 1.1 L15 0 V7 H7.4 Z M0 7.8 H6.6 V13.7 L0 12.8 Z M7.4 7.8 H15 V15 L7.4 13.9 Z" fill="#fff"/></svg>
<div class="srch">
  <svg style="left:11px;top:8px" width="16" height="17" viewBox="0 0 16 17"><circle cx="10" cy="6.5" r="4.7" stroke="#333" stroke-width="1.5" fill="none"/><path d="M6.6 10 L1 15.8" stroke="#333" stroke-width="1.6"/></svg>
  <span class="t" style="letter-spacing:-0.741px;left:37px;top:10.5px;font-size:15px;color:#3b3b3b">Type here to search</span>
</div>
<!-- cortana -->
<svg style="left:379px;top:10px" width="16" height="16" viewBox="0 0 16 16"><circle cx="8" cy="8" r="6.3" stroke="#fff" stroke-width="2" fill="none"/></svg>
<!-- task view -->
<svg style="left:423px;top:10px" width="18" height="16" viewBox="0 0 18 16"><rect x="1.9" y="4.6" width="9.2" height="7" stroke="#fff" stroke-width="1.300" fill="none"/><path d="M1.300 3 V1.700 H11.700 V3 M1.300 13 V14.300 H11.700 V13" stroke="#fff" stroke-width="1.200" fill="none"/><path d="M14.500 1 V4.500 M14.500 8.500 V15" stroke="#fff" stroke-width="1.500"/><circle cx="14.500" cy="6.500" r="1.300" fill="#fff"/></svg>
<!-- sublime -->
<div class="abs" style="left:468px;top:7px;width:22px;height:22px;border-radius:3px;background:#3f3f3f"></div>
<svg style="left:472px;top:10px" width="14" height="16" viewBox="0 0 14 16"><path d="M1 4.2 L13 0.5 V4.2 L5.5 6.8 L13 9.2 V11.8 L1 15.5 V11.8 L8.5 9.2 L1 6.8 Z" fill="#ff9800"/></svg>
<!-- explorer -->
<svg style="left:514px;top:9px" width="21" height="18" viewBox="0 0 21 18"><path d="M0 1.5 H7 L9 3.5 H21 V17 H0 Z" fill="#f5c33b"/><path d="M0 5 H21 V17 H0 Z" fill="#fbd968"/><path d="M5 11 H16 V17 H13.2 V13.4 H7.8 V17 H5 Z" fill="#2f86d6"/></svg>
<!-- snipping -->
<svg style="left:559px;top:8px" width="24" height="22" viewBox="0 0 24 22"><ellipse cx="10.500" cy="10.500" rx="10" ry="6" transform="rotate(-14 10.500 10.500)" fill="#a9403c"/><ellipse cx="11" cy="8" rx="10.200" ry="6.200" transform="rotate(-14 11 8)" fill="#ececf1"/><path d="M7 4.500 L13 11 M13.500 3.500 L9.500 10.500" stroke="#b9bcc6" stroke-width="1.100"/><path d="M13 10 L19 16.500 M17.500 9.500 L15 16" stroke="#2a8fd8" stroke-width="1.400"/><circle cx="20.300" cy="18" r="2" stroke="#2a8fd8" stroke-width="1.500" fill="none"/><circle cx="15" cy="18.800" r="2" stroke="#2a8fd8" stroke-width="1.500" fill="none"/></svg>
<!-- chrome (active) -->
<div class="abs" style="left:594px;top:0;width:44.500px;height:37px;background:#37383a"></div><div class="abs" style="left:594px;top:0;width:41px;height:37px;background:#474849"></div>
<div class="abs" style="left:594px;top:35px;width:44px;height:2px;background:#76b9ed"></div>
<svg style="left:604.5px;top:7px" width="26" height="24" viewBox="0 0 26 24"><circle cx="10.5" cy="10.5" r="10" fill="#db4437"/><path d="M10.5 10.5 L1.9 5.5 A10 10 0 0 0 5.6 19.2 Z" fill="#0f9d58"/><path d="M10.5 10.5 L5.6 19.2 A10 10 0 0 0 20.5 10.5 Z" fill="#ffcd40"/><path d="M10.5 10.5 L19.1 5.5 A10 10 0 0 1 20.5 10.5 Z" fill="#ffcd40"/><circle cx="10.5" cy="10.5" r="4.6" fill="#f1f1f1"/><circle cx="10.5" cy="10.5" r="3.7" fill="#4285f4"/><circle cx="18.5" cy="17" r="6.5" fill="#e8eaed"/><circle cx="18.5" cy="15" r="2.2" fill="#5f6368"/><path d="M14.2 20.5 C14.8 17.6 22.2 17.6 22.8 20.5 Z" fill="#5f6368"/></svg>
<!-- filezilla -->
<div class="abs" style="left:642.5px;top:35px;width:38px;height:2px;background:#76b9ed"></div>
<div class="abs" style="left:651px;top:7px;width:22px;height:22px;background:#b40f10"></div>
<span class="t" style="left:653.5px;top:9px;font-size:19px;font-weight:bold;font-style:italic;color:#fff;letter-spacing:-1.5px">Fz</span>
<!-- word -->
<svg style="left:695px;top:7px" width="24" height="23" viewBox="0 0 24 23"><rect x="2" y="1" width="19.500" height="19.500" fill="#eaf1fb" stroke="#7ea6dd" stroke-width="1"/><path d="M2 16.500 H21.500 V20.500 H2 Z" fill="#c6d9f3"/><path d="M14.500 12.500 L22.500 10.500 L21.500 17.500 L14.500 18.500 Z" fill="#f7f9fd" stroke="#9db4d6" stroke-width=".600"/></svg>
<span class="t" style="left:697.500px;top:9.500px;font-size:16px;font-weight:bold;color:#1c4fa5;letter-spacing:-1px">W</span>
<!-- sticky notes -->
<div class="abs" style="left:731px;top:0;width:44px;height:37px;background:#a6601f"></div>
<div class="abs" style="left:731px;top:35px;width:44px;height:2px;background:#ff8c00"></div>
<svg style="left:742.300px;top:8.200px" width="21" height="20" viewBox="0 0 21 20"><rect width="21" height="20" rx="1" fill="#fdd60f"/><path d="M0 13 H21 V20 H0 Z" fill="#fbcb12"/><path d="M21 10.500 V20 H11 Z" fill="#e6b20c"/><path d="M10.500 11.500 L21 10.300 L11 20 Z" fill="#3b3b3b"/></svg>
<!-- weather -->
<svg style="left:1062px;top:9px" width="22" height="19" viewBox="0 0 22 19"><circle cx="10" cy="8.5" r="8" fill="#f8b720"/><circle cx="9" cy="7" r="5" fill="#fccf3e"/><path d="M3 14 C3 11.5 6.5 11 7.5 12.5 C8.5 10.5 13 10.5 14 12.5 C16.5 11.8 18.5 13 18.5 14.8 C18.5 16 17.5 17 16 17 H5.5 C4 17 3 15.8 3 14 Z" fill="#f0e6d2"/><path d="M2 17.6 H18 M4 15.3 H19" stroke="#d9c9a8" stroke-width=".8"/></svg>
<span class="t" style="letter-spacing:-0.512px;left:1090.5px;top:13px;font-size:13px;color:#fff">30°C</span>
<span class="t" style="letter-spacing:-0.465px;left:1126px;top:13px;font-size:13px;color:#fff">Haze</span>
<svg style="left:1169px;top:14px" width="12" height="8" viewBox="0 0 12 8"><path d="M1 7 L6 1.5 L11 7" stroke="#fff" stroke-width="1.3" fill="none"/></svg>
<!-- network -->
<svg style="left:1190px;top:12px" width="16" height="13" viewBox="0 0 16 13"><rect x="3.6" y="0.6" width="11.8" height="8" stroke="#fff" stroke-width="1.2" fill="none"/><path d="M9.5 8.6 V11 M6 11.6 H13" stroke="#fff" stroke-width="1.2"/><path d="M0.6 2 V11.6 H4.4 V4 Z" fill="#212223" stroke="#fff" stroke-width="1.1"/></svg>
<!-- speaker -->
<svg style="left:1212px;top:12px" width="16" height="13" viewBox="0 0 16 13"><path d="M0.7 4.5 H3.3 L6.6 1.2 V11.8 L3.3 8.5 H0.7 Z" stroke="#fff" stroke-width="1.1" fill="none"/><path d="M8.8 4.3 C9.9 5.5 9.9 7.5 8.8 8.7 M10.8 2.7 C12.9 4.8 12.9 8.2 10.8 10.3 M12.8 1 C15.8 4 15.8 9 12.8 12" stroke="#fff" stroke-width="1" fill="none"/></svg>
<span class="t" style="letter-spacing:-0.387px;left:1238px;top:4.5px;font-size:11.5px;color:#fff">10:37 AM</span>
<span class="t" style="letter-spacing:-0.320px;left:1234px;top:21px;font-size:11.5px;color:#fff">10/11/2021</span>
<!-- notifications -->
<svg style="left:1302px;top:11px" width="24" height="24" viewBox="0 0 24 24"><path d="M0 0 H15.500 V11.500 H4 V14.500 L1.500 11.500 H0 Z" fill="#fff"/><path d="M2.500 2.800 H13 M2.500 5.300 H13 M2.500 7.800 H13" stroke="#212223" stroke-width=".900"/><circle cx="14.200" cy="14" r="6.800" fill="#212223" stroke="#b9b9b9" stroke-width="1"/></svg>
<span class="t" style="left:1313.300px;top:20px;font-size:10.500px;font-weight:bold;color:#fff">2</span>

</div>
</body>
</html>
